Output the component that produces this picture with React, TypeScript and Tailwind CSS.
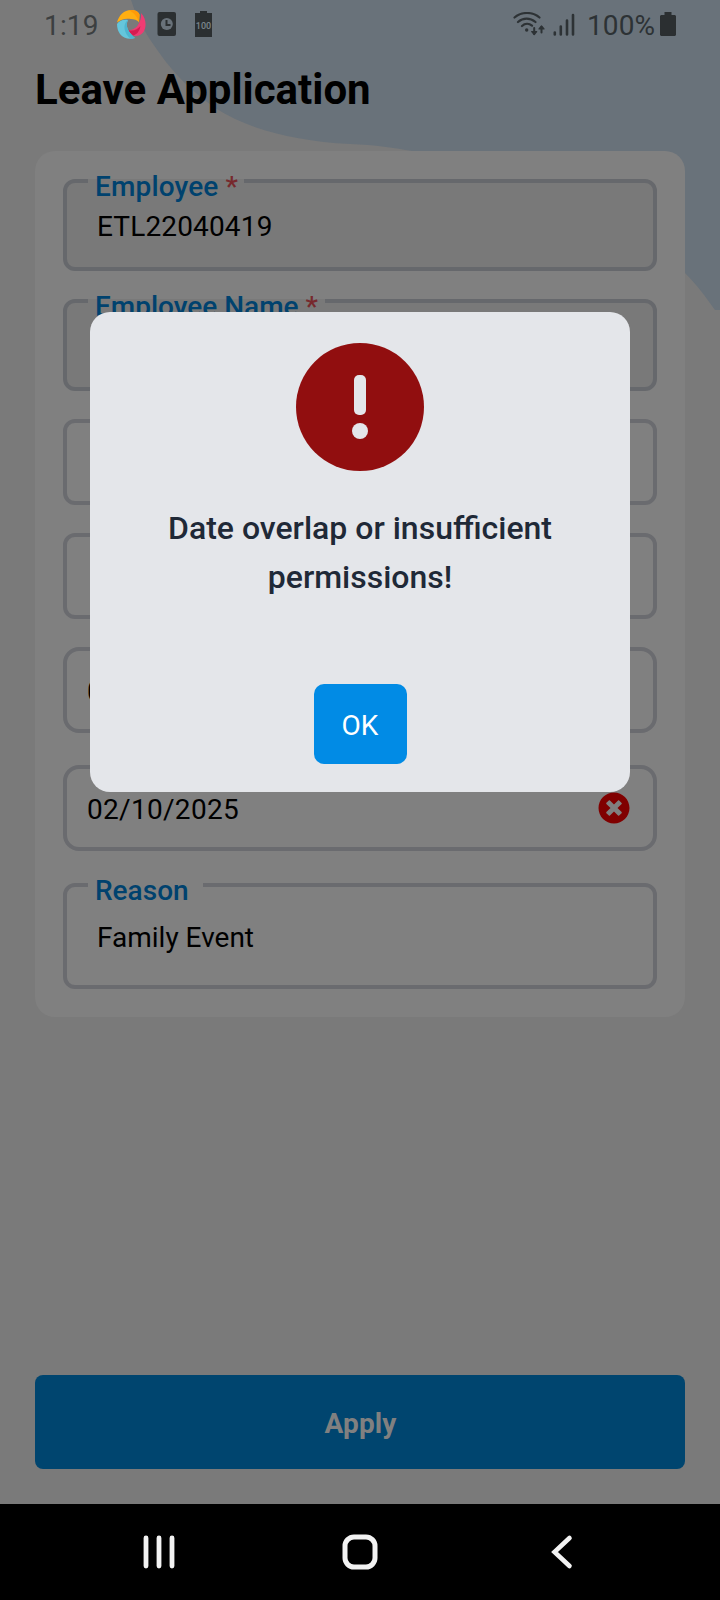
import type { ReactNode } from "react";
import { FaTimesCircle } from "react-icons/fa";

function StatusBar() {
  return (
    <div className="flex h-12 items-center justify-between pl-11 pr-11 text-[28px] leading-none text-[#3c3f40]">
      <div className="flex items-center">
        <span className="w-[73px] whitespace-nowrap pt-[3px] tracking-[0.15px]">1:19</span>
        <svg width="29" height="29" viewBox="0 0 29 29">
          <path d="M0 12.500C2 5 7 0 14 0c4 0 7 1 8.500 4.500L22 12c-2-2-5-3-8-3-5-1-10 0-14 3.500Z" fill="#ffae10" />
          <path d="M12 0c6-.5 10 2 10.500 5l-.5 8c-1-6-5-10-10-13Z" fill="#ff9a08" />
          <path d="M24 3c5 5 6 13 2.500 19-3 4-8 5-11 3-2-1-3-3-4-5 4 0 8-2 10-6 2-3 3-7 2.500-11Z" fill="#ee3c73" />
          <path d="M11.500 20c5 1.500 9-.5 12-4-1 5-3 8-7 9.500-2.500-1-4-3-5-5.500Z" fill="#d61c51" />
          <path d="M0 14c2-3 6-5 11-4-3 6 0 12 7 18C12 30 6 28 3 24 1 21 0 18 0 14Z" fill="#65c6dc" />
          <path d="M11 10c-3 6 0 12 7 18l-4 1C7 24 5 14 11 10Z" fill="#4db5d0" />
        </svg>
        <svg className="ml-[11px]" width="20" height="24" viewBox="0 0 20 24">
          <rect x="0.500" y="0" width="18.500" height="24" rx="2" fill="#2b2f31" />
          <circle cx="9.800" cy="12" r="6" fill="#69727a" />
          <path d="M9.500 8v5h4" fill="none" stroke="#2b2f31" strokeWidth="2" />
        </svg>
        <svg className="ml-[18px]" width="17" height="26" viewBox="0 0 17 26">
          <path d="M5 0h7v2h5v24H0V2h5Z" fill="#2b2f31" />
          <text x="8.500" y="18" textAnchor="middle" fill="#7b858c" className="font-[Roboto] text-[9px] font-medium">100</text>
        </svg>
      </div>
      <div className="flex items-center text-[#2d3235]">
        <svg width="33" height="24" viewBox="0 0 33 24" fill="none" stroke="#2d3235" strokeWidth="2.200" strokeLinecap="round">
          <path d="M1.500 5.500C8.500-.5 19.500-.5 26.500 5.500M5 10c5-4.500 12-4.500 17.500 0M9 14c3-2.700 7-2.700 10-.3" />
          <circle cx="13.700" cy="18" r="1.700" fill="#2d3235" stroke="none" />
          <path d="M21.200 16v6M28.500 20.500v-5.500" strokeWidth="2" />
          <path d="M18.700 19.500h5l-2.500 3ZM26 17h5l-2.500-3Z" fill="#2d3235" strokeWidth="1.200" strokeLinejoin="round" />
        </svg>
        <svg className="ml-[7px]" width="22" height="24" viewBox="0 0 22 24" stroke="#2d3235" strokeWidth="2.600" strokeLinecap="round">
          <path d="M1.800 20.500v2M7.800 14.500v8M14 8.500v14M20 3v19.500" />
        </svg>
        <span className="ml-[12px] w-[73px] whitespace-nowrap pt-[3px] tracking-[0.1px]">100%</span>
        <svg width="16" height="24" viewBox="0 0 16 24" fill="#2b2f31">
          <path d="M4.500 0h7v3H15l1 1v19l-1 1H1l-1-1V4l1-1h3.500Z" />
        </svg>
      </div>
    </div>
  );
}

function Legend({ text, required }: { text: string; required?: boolean }) {
  return (
    <span className="absolute -top-[13px] left-7 whitespace-nowrap text-[28px] font-medium leading-[33px] text-[#00426e]">
      {text}
      {required && <span className="text-[#77292d]"> *</span>}
    </span>
  );
}

function DateField({ children, spaced }: { children?: ReactNode; spaced?: boolean }) {
  return (
    <div
      className={`flex h-[86px] shrink-0 items-center justify-between rounded-2xl border-4 border-[#6a6b6f] pl-5 pr-[23px] text-[28px] text-black ${spaced ? "mt-8" : "mt-7"}`}
    >
      {children}
    </div>
  );
}

function LeaveForm() {
  return (
    <div className="mx-[35px] mt-[33px] flex h-[866px] flex-col rounded-[20px] bg-[#808080] p-7">
      <div className="relative flex h-[92px] shrink-0 rounded-xl border-4 border-[#66686c] bg-[#797979] pl-[30px] pt-[27px] text-[28px] leading-[33px] tracking-[0.15px] text-black">
        <span className="absolute -top-1 left-[21px] h-1 w-[156px] bg-[#797979]" />
        <Legend text="Employee" required />
        ETL22040419
      </div>
      <div className="relative mt-7 h-[92px] shrink-0 rounded-xl border-4 border-[#66686c] bg-[#797979]">
        <span className="absolute -top-1 left-[21px] h-1 w-[237px] bg-[#797979]" />
        <Legend text="Employee Name" required />
      </div>
      <div className="mt-7 h-[86px] shrink-0 rounded-xl border-4 border-[#6a6b6f]" />
      <div className="mt-7 h-[86px] shrink-0 rounded-xl border-4 border-[#6a6b6f]" />
      <DateField>
        <span className="pt-[3px] tracking-[0.3px]">02/10/2025</span>
      </DateField>
      <DateField spaced>
        <span className="pt-[3px] tracking-[0.3px]">02/10/2025</span>
        <FaTimesCircle size={32} color="#800000" />
      </DateField>
      <div className="relative mt-8 flex h-[106px] shrink-0 rounded-xl border-4 border-[#6a6b6f] pl-[30px] pt-[34px] text-[28px] leading-[33px] text-black">
        <span className="absolute -top-1 left-[21px] h-1 w-[115px] bg-[#808080]" />
        <Legend text="Reason" />
        Family Event
      </div>
    </div>
  );
}

function AlertDialog() {
  return (
    <div className="absolute inset-0 flex items-start justify-center pt-[312px]">
      <div className="flex h-[480px] w-[540px] flex-col items-center rounded-[20px] bg-[#e4e6ea] pb-7 pt-[31px]">
        <svg width="128" height="128" viewBox="0 0 128 128">
          <circle cx="64" cy="64" r="64" fill="#910e0f" />
          <rect x="58" y="32" width="12" height="40" rx="5" fill="#e4e6ea" />
          <circle cx="64" cy="88" r="8" fill="#e4e6ea" />
        </svg>
        <p className="mt-[33px] w-[420px] text-center text-[32px] font-medium leading-[49px] text-[#1f2937]">
          Date overlap or insufficient permissions!
        </p>
        <button className="mt-auto h-20 w-[93px] rounded-[10px] bg-[#018be5] pt-[3px] text-[28px] text-white">OK</button>
      </div>
    </div>
  );
}

function NavigationBar() {
  return (
    <div className="flex h-24 items-center bg-black pl-[142px]">
      <svg width="34" height="36" viewBox="0 0 34 36" stroke="#f3f3f3" strokeWidth="4.800" strokeLinecap="round">
        <path d="M4 4v28M17 4v28M30 4v28" />
      </svg>
      <svg className="ml-[166px]" width="36" height="36" viewBox="0 0 36 36" fill="none" stroke="#f3f3f3" strokeWidth="5">
        <rect x="3" y="3" width="30" height="30" rx="9" />
      </svg>
      <svg className="ml-[173px]" width="22" height="36" viewBox="0 0 22 36" fill="none" stroke="#f3f3f3" strokeWidth="4.600" strokeLinecap="round">
        <path d="M18.500 4 3.500 18l15 14" />
      </svg>
    </div>
  );
}

export default function App() {
  return (
    <div className="flex h-[1600px] w-[720px] flex-col overflow-hidden bg-black font-[Roboto,sans-serif]">
      <div className="relative h-[1504px] bg-[#7a7a7a]">
        <svg className="absolute left-0 top-0" width="720" height="320" viewBox="0 0 720 320">
          <path
            d="M131 0C138 22 148 38 166 62C181 81 196 94 215 108C250 130 295 141 350 144C375 145 395 148 412 151C520 165 620 205 685 273C697 285 705 296 715 310H720V0Z"
            fill="#69727a"
          />
        </svg>
        <div className="relative flex h-full flex-col">
          <StatusBar />
          <h1 className="ml-[35px] mt-[17px] h-[53px] text-[42px] font-bold leading-[50px] text-black">Leave Application</h1>
          <LeaveForm />
          <button className="mx-[35px] mb-[35px] mt-auto h-[94px] rounded-lg bg-[#00456f] pl-px pt-[3px] text-[28px] font-bold tracking-[0.1px] text-[#808080]">
            Apply
          </button>
        </div>
        <AlertDialog />
      </div>
      <NavigationBar />
    </div>
  );
}
